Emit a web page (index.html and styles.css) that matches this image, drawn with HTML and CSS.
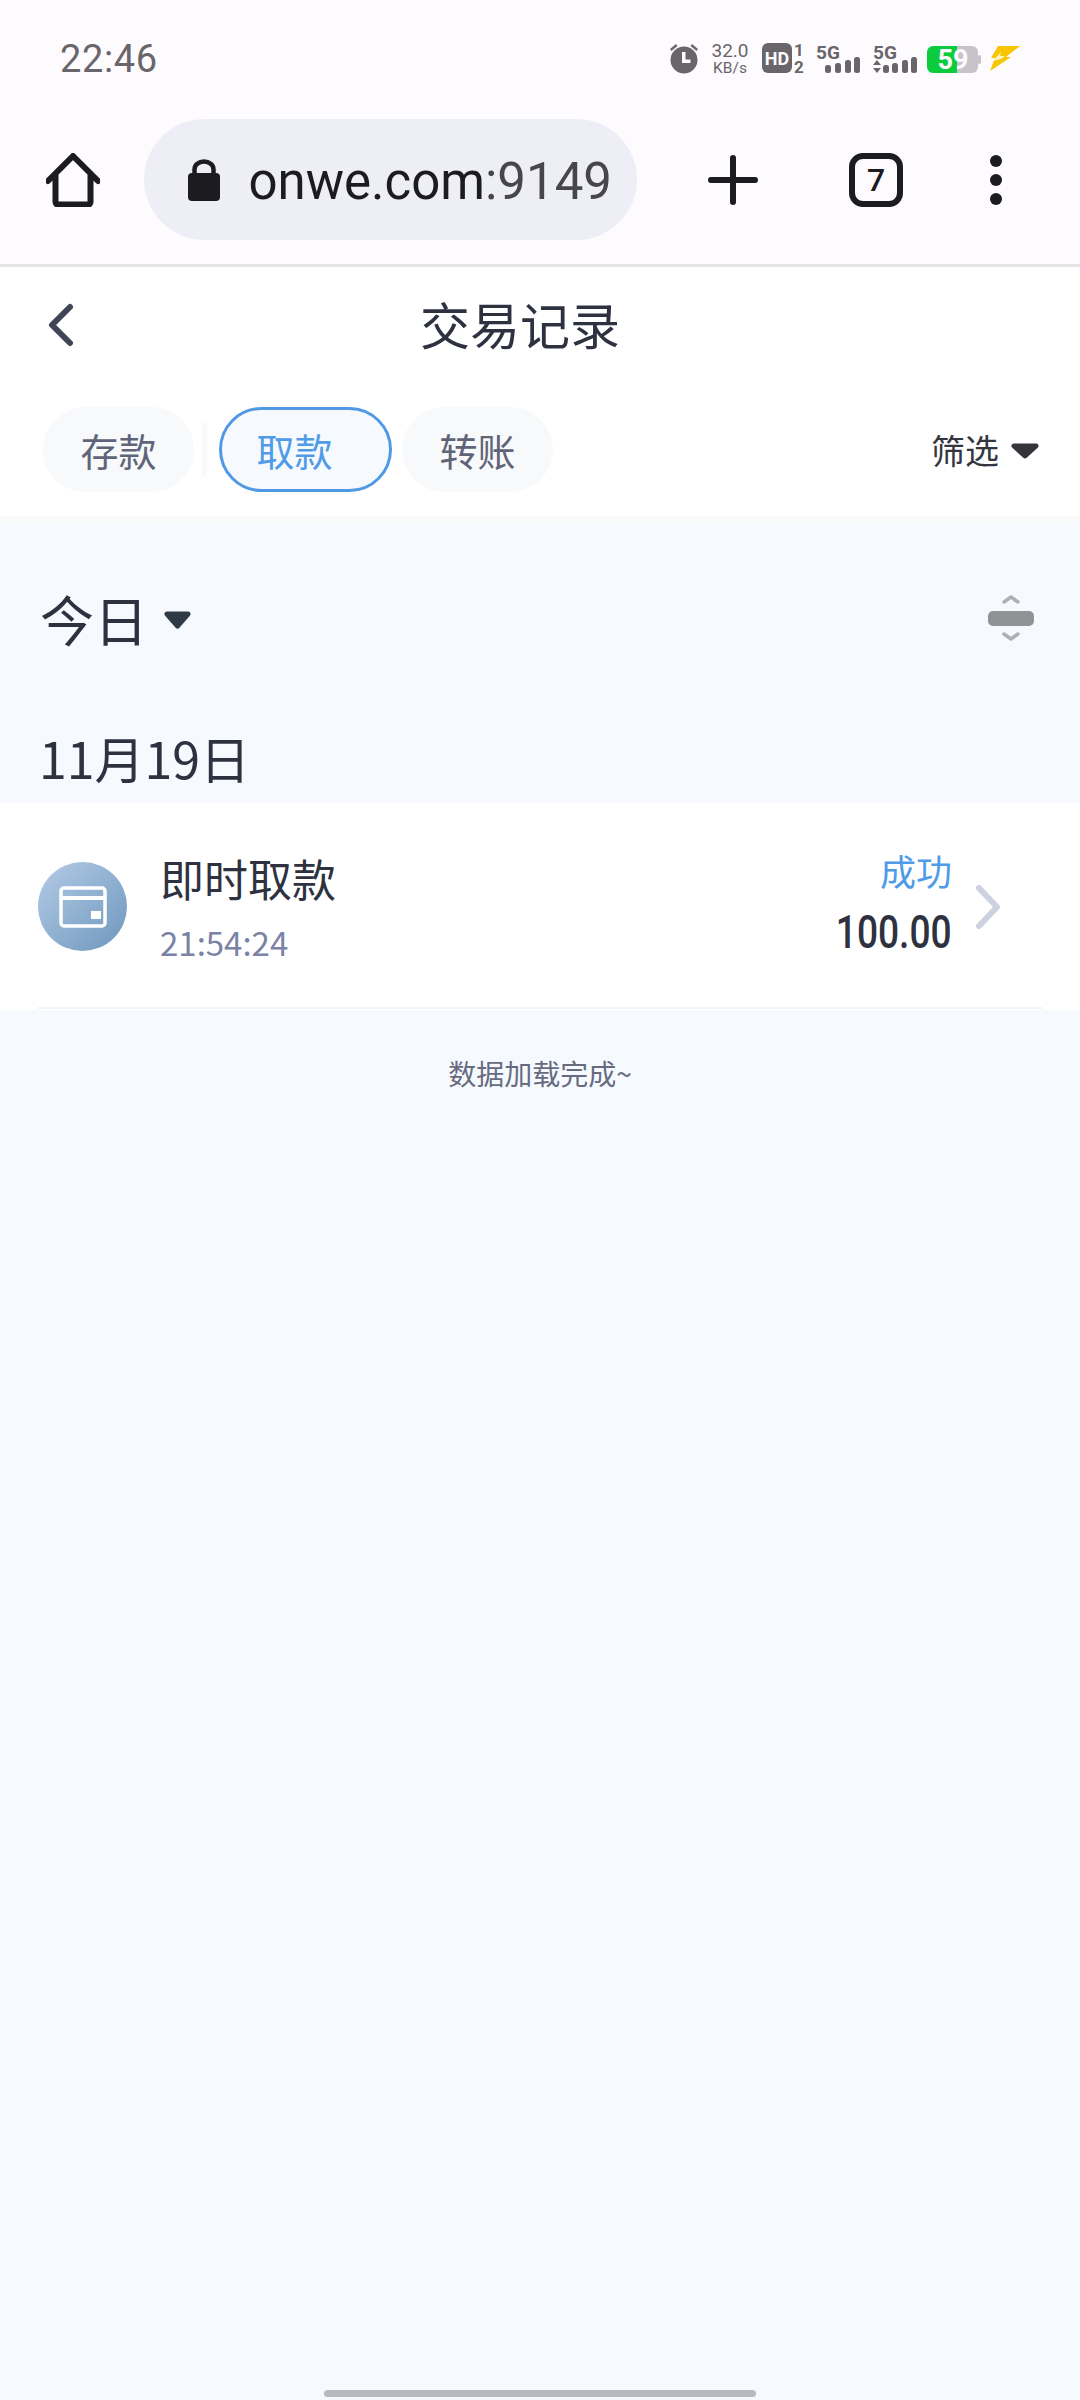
FILE: index.html
```html
<!DOCTYPE html>
<html lang="zh">
<head>
<meta charset="utf-8">
<title>交易记录</title>
<link rel="stylesheet" href="styles.css">
</head>
<body>
<div class="phone">
  <header class="chrome">
    <div class="statusbar">
      <span class="clock">22:46</span>
      <svg class="status-icons" width="356" height="46" viewBox="668 34 356 46">
        <g fill="#68666a">
          <circle cx="684" cy="60" r="13.5"/>
          <path d="M670 49l6-5 1.500 2-6 5zM698 49l-6-5-1.500 2 6 5z"/>
          <path d="M682 52h3.500v7.500h5v3.500h-8.500z" fill="#fefbfe"/>
          <text x="730" y="57" class="s-speed" text-anchor="middle">32.0</text>
          <text x="730" y="73" class="s-unit" text-anchor="middle">KB/s</text>
          <rect x="762" y="43" width="30" height="30" rx="6"/>
          <text x="777" y="64.500" class="s-hd" text-anchor="middle" fill="#fefbfe">HD</text>
          <text x="799" y="56" class="s-sim" text-anchor="middle">1</text>
          <text x="799" y="73" class="s-sim" text-anchor="middle">2</text>
          <text x="816" y="59" class="s-5g">5G</text>
          <rect x="825" y="65" width="6" height="8" rx="2.500"/><rect x="835" y="63" width="6" height="10" rx="2.500"/><rect x="845" y="60" width="6" height="13" rx="2.500"/><rect x="854" y="57" width="6" height="16" rx="2.500"/>
          <text x="873" y="59" class="s-5g">5G</text>
          <path d="M877 60l4 5h-8zM877 73l4-5h-8z"/>
          <rect x="883" y="65" width="6" height="8" rx="2.500"/><rect x="892" y="63" width="6" height="10" rx="2.500"/><rect x="902" y="60" width="6" height="13" rx="2.500"/><rect x="911" y="57" width="6" height="16" rx="2.500"/>
        </g>
        <path d="M957 46h15a6 6 0 0 1 6 6v15a6 6 0 0 1-6 6h-15z" fill="#c6c4c8"/>
        <rect x="978" y="55" width="3" height="9" rx="1.500" fill="#c6c4c8"/>
        <path d="M957 46h-24a6 6 0 0 0-6 6v15a6 6 0 0 0 6 6h24z" fill="#0ccb3c"/>
        <text x="953" y="69" class="s-batt" text-anchor="middle" fill="#fefbfe">59</text>
        <path d="M998 46h22l-14 11h5l-21 14 5-13h-4z" fill="#f7c600"/>
        <path d="M1001 52l-8 9 8-2 4-3h-5z" fill="#fff3c0"/>
      </svg>
    </div>
    <div class="toolbar">
      <svg class="tb-home" width="54" height="54" viewBox="0 0 54 54">
        <path d="M2 28L27 3l25 25M9.500 22v27a2.500 2.500 0 0 0 2.500 2.500h30a2.500 2.500 0 0 0 2.500-2.500V22" fill="none" stroke="#1c1b20" stroke-width="6" stroke-linecap="round" stroke-linejoin="round"/>
      </svg>
      <div class="omnibox">
        <svg class="lock" width="34" height="42" viewBox="0 0 34 42">
          <path d="M7.500 18v-7.500a9.500 8 0 0 1 19 0V18" fill="none" stroke="#1c1b20" stroke-width="4.500"/>
          <rect x="1" y="14" width="32" height="28" rx="4" fill="#1c1b20"/>
        </svg>
        <div class="url"><span class="url-host">onwe.com</span><span class="url-port">:9149</span></div>
      </div>
      <svg class="tb-plus" width="50" height="50" viewBox="0 0 50 50">
        <path d="M25 3v44M3 25h44" stroke="#1c1b20" stroke-width="6" stroke-linecap="round"/>
      </svg>
      <div class="tab-count">7</div>
      <div class="tb-menu"><i></i><i></i><i></i></div>
    </div>
  </header>

  <section class="nav">
    <div class="nav-top">
      <svg class="back" width="30" height="44" viewBox="0 0 30 44">
        <path d="M24 4L6 22l18 18" fill="none" stroke="#3f4554" stroke-width="6" stroke-linecap="round" stroke-linejoin="round"/>
      </svg>
      <h1 class="title">交易记录</h1>
    </div>
    <div class="tabs">
      <span class="tab">存款</span>
      <span class="tab-sep"></span>
      <span class="tab tab-active">取款</span>
      <span class="tab tab-last">转账</span>
      <span class="filter">筛选
        <svg class="tri tri-filter" width="28" height="16" viewBox="0 0 28 16"><path d="M3 3h22L14 13z"/></svg>
      </span>
    </div>
  </section>
  <div class="band"></div>

  <section class="period">
    <div class="period-label">今日
      <svg class="tri tri-period" width="27" height="18" viewBox="0 0 27 18"><path d="M3 3h21L13.500 15z"/></svg>
    </div>
    <svg class="sort" width="46" height="50" viewBox="0 0 46 50">
      <path d="M16 9l7-5 7 5M16 41l7 5 7-5" fill="none" stroke="#aeb0b5" stroke-width="3.500" stroke-linecap="round" stroke-linejoin="round"/>
      <rect x="0" y="18" width="46" height="15" rx="5" fill="#909296"/>
    </svg>
  </section>

  <div class="date">11月19日</div>

  <article class="record">
    <div class="record-icon">
      <svg width="48" height="42" viewBox="0 0 48 42">
        <rect x="2" y="2" width="44" height="38" rx="3" fill="none" stroke="#fff" stroke-width="3.500"/>
        <rect x="2" y="10" width="44" height="4" fill="#fff"/>
        <rect x="32" y="25" width="10" height="8" fill="#fff"/>
      </svg>
    </div>
    <div class="record-main">
      <div class="record-name">即时取款</div>
      <div class="record-time">21:54:24</div>
    </div>
    <div class="record-side">
      <div class="record-state">成功</div>
      <div class="record-amount">100.00</div>
    </div>
    <svg class="record-arrow" width="26" height="44" viewBox="0 0 26 44">
      <path d="M4 3l18 19L4 41" fill="none" stroke="#cdd1e0" stroke-width="6" stroke-linecap="round" stroke-linejoin="round"/>
    </svg>
  </article>

  <p class="done">数据加载完成~</p>

  <div class="home-bar"></div>
</div>
</body>
</html>
```

FILE: styles.css
```css
* { box-sizing: border-box; }
html, body { margin: 0; padding: 0; }
body { background: #f6faff; font-family: "Noto Sans CJK SC", "Noto Sans", sans-serif; }
i { display: block; }

.phone { width: 1080px; height: 2400px; display: flex; flex-direction: column; background: #f6faff; overflow: hidden; }

.chrome { height: 267px; background: #fefbfe; border-bottom: 3px solid #e6e4e8; flex: none; }
.statusbar { height: 119px; display: flex; align-items: flex-start; justify-content: space-between; padding: 34px 56px 0 60px; }
.clock { margin-top: 8px; font-family: "Roboto", sans-serif; font-size: 38px; line-height: 34px; color: #68666a; letter-spacing: .6px; }
.status-icons { display: block; }
.s-speed { font: 400 19px "Roboto", sans-serif; }
.s-unit { font: 400 15.500px "Roboto", sans-serif; }
.s-hd { font: 700 18px "Roboto", sans-serif; }
.s-sim { font: 700 17px "Roboto", sans-serif; }
.s-5g { font: 700 19px "Roboto", sans-serif; }
.s-batt { font: 700 27px "Roboto", sans-serif; }

.toolbar { height: 121px; display: flex; align-items: center; padding-left: 46px; }
.tb-home { flex: none; display: block; }
.omnibox { margin-left: 44px; width: 493px; height: 121px; border-radius: 61px; background: #eeeff6; display: flex; align-items: center; padding-left: 43px; flex: none; }
.lock { flex: none; display: block; }
.url { margin-left: 29px; width: 362px; overflow: hidden; display: flex; justify-content: flex-end; white-space: nowrap; font-family: "Roboto", sans-serif; font-size: 51px; line-height: 64px; padding-top: 4px; }
.url-host { color: #1c1b20; }
.url-port { color: #47464d; }
.tb-plus { margin-left: 71px; flex: none; display: block; }
.tab-count { margin-left: 91px; width: 54px; height: 54px; border: 6px solid #1c1b20; border-radius: 14px; display: flex; align-items: center; justify-content: center; font: 500 32px "Roboto", sans-serif; color: #1c1b20; flex: none; }
.tb-menu { margin-left: 87px; display: flex; flex-direction: column; gap: 7px; flex: none; }
.tb-menu i { width: 12px; height: 12px; border-radius: 50%; background: #1c1b20; }

.nav { height: 249px; background: #fff; flex: none; }
.nav-top { height: 111px; position: relative; display: flex; align-items: center; justify-content: center; padding-right: 40px; }
.back { position: absolute; left: 46px; top: 36px; display: block; }
.title { margin: 0; font-size: 50px; font-weight: 400; line-height: 70px; color: #2e3240; }
.tabs { height: 85px; margin-top: 29px; display: flex; align-items: center; padding: 0 41px 0 43px; }
.tab { width: 151px; height: 85px; border-radius: 43px; background: #f7f9fb; color: #5f6478; font-size: 38px; display: flex; align-items: center; justify-content: center; flex: none; }
.tab-sep { width: 5px; height: 54px; margin: 0 12px 0 8px; background: #f7f9fb; flex: none; }
.tab-active { width: 173px; padding-right: 22px; background: #f6faff; border: 3px solid #5199e4; color: #4f9be8; }
.tab-last { margin-left: 10px; }
.filter { margin-left: auto; display: flex; align-items: center; font-size: 34px; color: #33363f; }
.tri { display: block; flex: none; stroke-width: 5; stroke-linejoin: round; }
.tri-filter { margin: 3px 0 0 12px; fill: #333539; stroke: #333539; }
.band { height: 7px; background: #f9f9fa; flex: none; }

.period { height: 150px; padding: 40px 46px 0 40px; display: flex; align-items: center; justify-content: space-between; flex: none; }
.period-label { display: flex; align-items: center; font-size: 54px; color: #2e3240; }
.tri-period { margin: 4px 0 0 16px; fill: #2e3a46; stroke: #2e3a46; }
.sort { display: block; flex: none; }

.date { height: 130px; padding: 0 39px 10px; display: flex; align-items: flex-end; font-size: 50px; line-height: 72px; color: #2e3240; flex: none; }

.record { height: 207px; background: #fff; display: flex; align-items: center; padding: 0 79px 0 38px; flex: none; position: relative; }
.record::after { content: ""; position: absolute; left: 38px; right: 38px; bottom: 1px; height: 2px; background: #f2f3f6; }
.record-icon { width: 89px; height: 89px; border-radius: 50%; background: linear-gradient(135deg, #b4cbe6, #6d97bd); display: flex; align-items: center; justify-content: center; flex: none; }
.record-icon svg { display: block; }
.record-main { margin-left: 33px; padding-bottom: 3px; display: flex; flex-direction: column; }
.record-name { font-size: 44px; line-height: 62px; color: #2e3240; }
.record-time { font-size: 33px; line-height: 44px; color: #7a83a6; margin-top: 11px; }
.record-side { margin-left: auto; padding-bottom: 7px; display: flex; flex-direction: column; align-items: flex-end; }
.record-state { font-size: 36px; line-height: 50px; color: #4f9be8; }
.record-amount { font-family: "Roboto", sans-serif; font-size: 47px; line-height: 60px; font-weight: 500; color: #2e3240; margin-top: 7px; transform: scaleX(.79); transform-origin: right center; }
.record-arrow { margin-left: 23px; display: block; flex: none; }

.done { margin: 43px 0 0; text-align: center; font-size: 28px; line-height: 40px; color: #666b80; }

.home-bar { margin: auto auto 3px; width: 432px; height: 7px; border-radius: 4px; background: #b8babf; flex: none; }
```
